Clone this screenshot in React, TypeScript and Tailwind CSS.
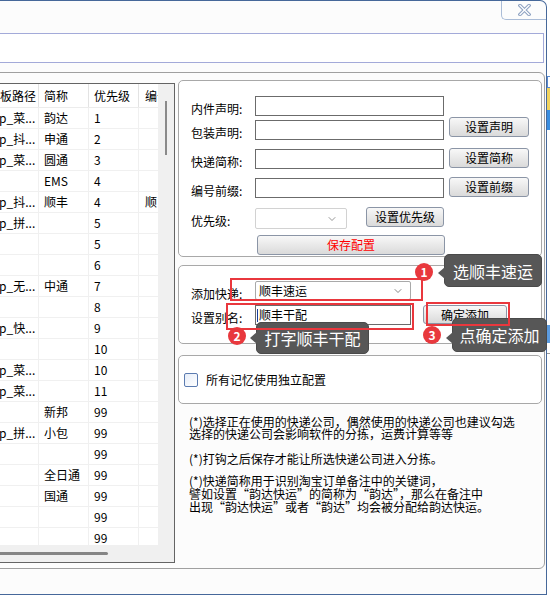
import React from 'react';
import { ChevronDown } from 'lucide-react';

const rows: [string, string, string, string][] = [
  ['mp_菜...', '韵达', '1', ''],
  ['mp_抖...', '申通', '2', ''],
  ['mp_菜...', '圆通', '3', ''],
  ['', 'EMS', '4', ''],
  ['mp_抖...', '顺丰', '4', '顺'],
  ['mp_拼...', '', '5', ''],
  ['', '', '5', ''],
  ['', '', '6', ''],
  ['mp_无...', '中通', '7', ''],
  ['', '', '8', ''],
  ['mp_快...', '', '9', ''],
  ['', '', '10', ''],
  ['mp_菜...', '', '10', ''],
  ['mp_菜...', '', '11', ''],
  ['', '新邦', '99', ''],
  ['mp_拼...', '小包', '99', ''],
  ['', '', '99', ''],
  ['', '全日通', '99', ''],
  ['', '国通', '99', ''],
  ['', '', '99', ''],
  ['', '', '99', ''],
];

// 旧式 Windows 按钮
const Btn = ({ children, className = '' }: { children: React.ReactNode; className?: string }) => (
  <div
    className={`flex items-center justify-center border border-[#8b95a6] rounded-[3px] bg-linear-to-b from-[#f8f8f8] to-[#dadada] text-[12px] leading-none shrink-0 ${className}`}
  >
    {children}
  </div>
);

const Label = ({ children }: { children: React.ReactNode }) => (
  <div className="w-[64px] shrink-0 pt-[6px] text-[12px] leading-[14px] text-black">{children}</div>
);

const ExpressTable = () => (
  <div className="mt-[3px] w-[176px] h-[480px] shrink-0 border border-[#646464] bg-[#f0f0f0] flex flex-col overflow-hidden">
    <div className="flex h-[461px]">
      {/* 表格内容（左侧被滚动遮住） */}
      <div className="w-[158px] h-full overflow-hidden bg-white">
        <div className="ml-[-17px] w-[230px] text-[12px] text-black">
          <div className="flex h-[24px] border-b border-[#ececec]">
            <div className="w-[56px] pl-[5px] leading-[24px] border-r border-[#e3e3e3] whitespace-nowrap">模板路径</div>
            <div className="w-[50px] pl-[5px] leading-[24px] border-r border-[#e3e3e3]">简称</div>
            <div className="w-[50px] pl-[5px] leading-[24px] border-r border-[#e3e3e3]">优先级</div>
            <div className="w-[60px] pl-[6px] leading-[24px]">编号前缀</div>
          </div>
          {rows.map((r, i) => (
            <div key={i} className="flex h-[21px] border-b border-[#f0f0f0]">
              <div className="w-[56px] pl-[5px] leading-[20px] border-r border-[#f0f0f0] whitespace-nowrap overflow-hidden">{r[0]}</div>
              <div className="w-[50px] pl-[5px] leading-[20px] border-r border-[#f0f0f0]">{r[1]}</div>
              <div className="w-[50px] pl-[5px] leading-[20px] border-r border-[#f0f0f0]">{r[2]}</div>
              <div className="w-[60px] pl-[6px] leading-[20px]">{r[3]}</div>
            </div>
          ))}
        </div>
      </div>
      {/* 竖滚动条 */}
      <div className="w-[16px] h-full bg-[#f0f0f0]">
        <div className="ml-[7px] mt-[17px] w-[2px] h-[54px] bg-[#8a8a8a]" />
      </div>
    </div>
    {/* 横滚动条 */}
    <div className="h-[17px] bg-[#f0f0f0]">
      <div className="mt-[7px] w-[108px] h-[3px] bg-[#858585] rounded-r-full" />
    </div>
  </div>
);

const Input = ({ className = '', children }: { className?: string; children?: React.ReactNode }) => (
  <div className={`h-[20px] border border-[#6b6b6b] bg-white shrink-0 ${className}`}>{children}</div>
);

const ConfigPanel = () => (
  <div className="ml-[3px] w-[364px] flex flex-col text-black">
    {/* 声明 / 简称 / 前缀 */}
    <div className="h-[177px] border border-[#a8a8a8] rounded-[5px] bg-white pl-[12px] pt-[15px]">
      <div className="flex items-start h-[20px]">
        <Label>内件声明:</Label>
        <Input className="w-[189px]" />
      </div>
      <div className="flex items-start h-[20px] mt-[4px]">
        <Label>包装声明:</Label>
        <Input className="w-[189px]" />
        <Btn className="ml-[5px] mt-[-3px] w-[80px] h-[20px]">设置声明</Btn>
      </div>
      <div className="flex items-start h-[20px] mt-[9px]">
        <Label>快递简称:</Label>
        <Input className="w-[189px]" />
        <Btn className="ml-[5px] mt-[-1px] w-[80px] h-[20px]">设置简称</Btn>
      </div>
      <div className="flex items-start h-[20px] mt-[9px]">
        <Label>编号前缀:</Label>
        <Input className="w-[189px]" />
        <Btn className="ml-[5px] mt-[-1px] w-[80px] h-[20px]">设置前缀</Btn>
      </div>
      <div className="flex items-start h-[21px] mt-[10px]">
        <Label>优先级:</Label>
        <div className="w-[92px] h-[21px] border border-[#d2d2d2] rounded-[2px] bg-white flex items-center justify-end pr-[8px]">
          <ChevronDown size={12} strokeWidth={1.4} color="#6a6a6a" />
        </div>
        <Btn className="ml-[19px] mt-[-1px] w-[78px] h-[20px]">设置优先级</Btn>
      </div>
      <div className="flex mt-[6px]">
        <Btn className="ml-[66px] w-[188px] h-[20px] text-[#ff0000]">保存配置</Btn>
      </div>
    </div>

    {/* 添加快递 */}
    <div className="mt-[8px] h-[79px] border border-[#a8a8a8] rounded-[5px] bg-white pl-[12px] pt-[15px]">
      <div className="flex items-start h-[19px]">
        <Label>添加快递:</Label>
        <div className="w-[156px] h-[19px] border border-[#a9a9a9] rounded-[2px] bg-white flex items-center justify-between pl-[3px] pr-[6px] text-[12px] leading-none">
          <span>顺丰速运</span>
          <ChevronDown size={12} strokeWidth={1.4} color="#555" />
        </div>
      </div>
      <div className="flex items-start h-[20px] mt-[5px]">
        <Label>设置别名:</Label>
        <Input className="w-[156px] flex items-center pl-[1px] text-[12px] leading-none">
          <span className="w-px h-[13px] bg-[#1a3f9a] mr-[1px]" />
          <span>顺丰干配</span>
        </Input>
        <Btn className="ml-[12px] w-[84px] h-[19px]">确定添加</Btn>
      </div>
    </div>

    {/* 独立配置 */}
    <div className="mt-[11px] h-[49px] border border-[#a8a8a8] rounded-[5px] bg-white pl-[5px] pt-[1px] flex items-center">
      <div className="w-[14px] h-[14px] border border-[#5b7bb0] rounded-[2px] bg-linear-to-br from-[#e6edf8] to-white" />
      <span className="ml-[8px] text-[12px] leading-none">所有记忆使用独立配置</span>
    </div>

    {/* 说明 */}
    <div className="pl-[11px] text-[12px] whitespace-nowrap">
      <div className="mt-[12px] leading-[12px]">
        <p>(*)选择正在使用的快递公司，偶然使用的快递公司也建议勾选</p>
        <p>选择的快递公司会影响软件的分拣，运费计算等等</p>
      </div>
      <p className="mt-[13px] leading-[12px]">(*)打钩之后保存才能让所选快递公司进入分拣。</p>
      <div className="mt-[9px] leading-[13px]">
        <p>(*)快递简称用于识别淘宝订单备注中的关键词，</p>
        <p>譬如设置“韵达快运”的简称为“韵达”，那么在备注中</p>
        <p>出现“韵达快运”或者“韵达”均会被分配给韵达快运。</p>
      </div>
    </div>
  </div>
);

const Tip = ({ text, className, arrowTop }: { text: string; className: string; arrowTop: string }) => (
  <div className={`absolute rounded-[5px] bg-[#575757] border border-[#4a4a4a] text-white text-[16px] leading-none flex items-center justify-center ${className}`}>
    <span className={`absolute left-[-7px] ${arrowTop} w-0 h-0 border-y-[6px] border-y-transparent border-r-[7px] border-r-[#575757]`} />
    {text}
  </div>
);

const Dot = ({ n, className }: { n: string; className: string }) => (
  <div className={`absolute w-[18px] h-[18px] rounded-full bg-[#e8383d] text-white text-[12px] font-bold leading-none flex items-center justify-center ${className}`}>
    {n}
  </div>
);

export default function App() {
  return (
    <div className="relative w-[550px] h-[595px] overflow-hidden bg-white flex font-['Noto_Sans_CJK_SC',sans-serif]">
      {/* 窗口 */}
      <div className="w-[547px] h-[595px] shrink-0 border-t border-r border-b border-[#46689a] rounded-tr-[7px] bg-[#fcfcfc] flex flex-col">
        <div className="h-[32px] flex justify-end items-start">
          <div className="w-[45px] h-[19px] border-l border-b border-[#aabcd7] rounded-bl-[5px] flex items-center justify-center">
            <svg width="13" height="12" viewBox="0 0 13 12">
              <path d="M2 1.5 L11 10.5 M11 1.5 L2 10.5" stroke="#8ea2c2" strokeWidth="3.4" strokeLinecap="square" />
              <path d="M2 1.5 L11 10.5 M11 1.5 L2 10.5" stroke="#ffffff" strokeWidth="1.3" strokeLinecap="square" />
            </svg>
          </div>
        </div>
        <div className="ml-[-2px] mr-[2px] h-[30px] border border-[#a3aad9] bg-white" />
        <div className="ml-[-2px] mr-[1px] mt-[9px] h-[497px] border border-[#a0a0a0] rounded-r-[6px] flex items-start pt-[7px]">
          <ExpressTable />
          <ConfigPanel />
        </div>
      </div>

      {/* 背后的其他窗口 */}
      <div className="w-[3px] h-full flex flex-col">
        <div className="h-[76px] bg-white" />
        <div className="h-[12px] border border-r-0 border-[#5a8ad0] bg-white" />
        <div className="h-[22px] bg-[#f2d35c]" />
        <div className="h-[20px] bg-[#3b8ee0]" />
        <div className="h-[195px] bg-white" />
        <div className="h-[18px] bg-[#5b9be0]" />
        <div className="h-[10px] bg-white" />
        <div className="h-px bg-[#9a9a9a]" />
        <div className="flex-1 bg-white" />
      </div>

      {/* 标注 */}
      <Tip text="选顺丰速运" className="left-[444px] top-[254px] w-[98px] h-[33px]" arrowTop="top-[12px]" />
      <Tip text="打字顺丰干配" className="left-[256px] top-[322px] w-[113px] h-[32px]" arrowTop="top-[9px]" />
      <Tip text="点确定添加" className="left-[452px] top-[318px] w-[95px] h-[34px]" arrowTop="top-[13px]" />

      <div className="absolute left-[230px] top-[278px] w-[193px] h-[23px] border-2 border-[#e9373d]" />
      <div className="absolute left-[226px] top-[303px] w-[188px] h-[27px] border-2 border-[#e9373d]" />
      <div className="absolute left-[426px] top-[302px] w-[84px] h-[24px] border-2 border-[#e9373d]" />

      <Dot n="1" className="left-[415px] top-[263px]" />
      <Dot n="2" className="left-[228px] top-[327px]" />
      <Dot n="3" className="left-[423px] top-[326px]" />
    </div>
  );
}
